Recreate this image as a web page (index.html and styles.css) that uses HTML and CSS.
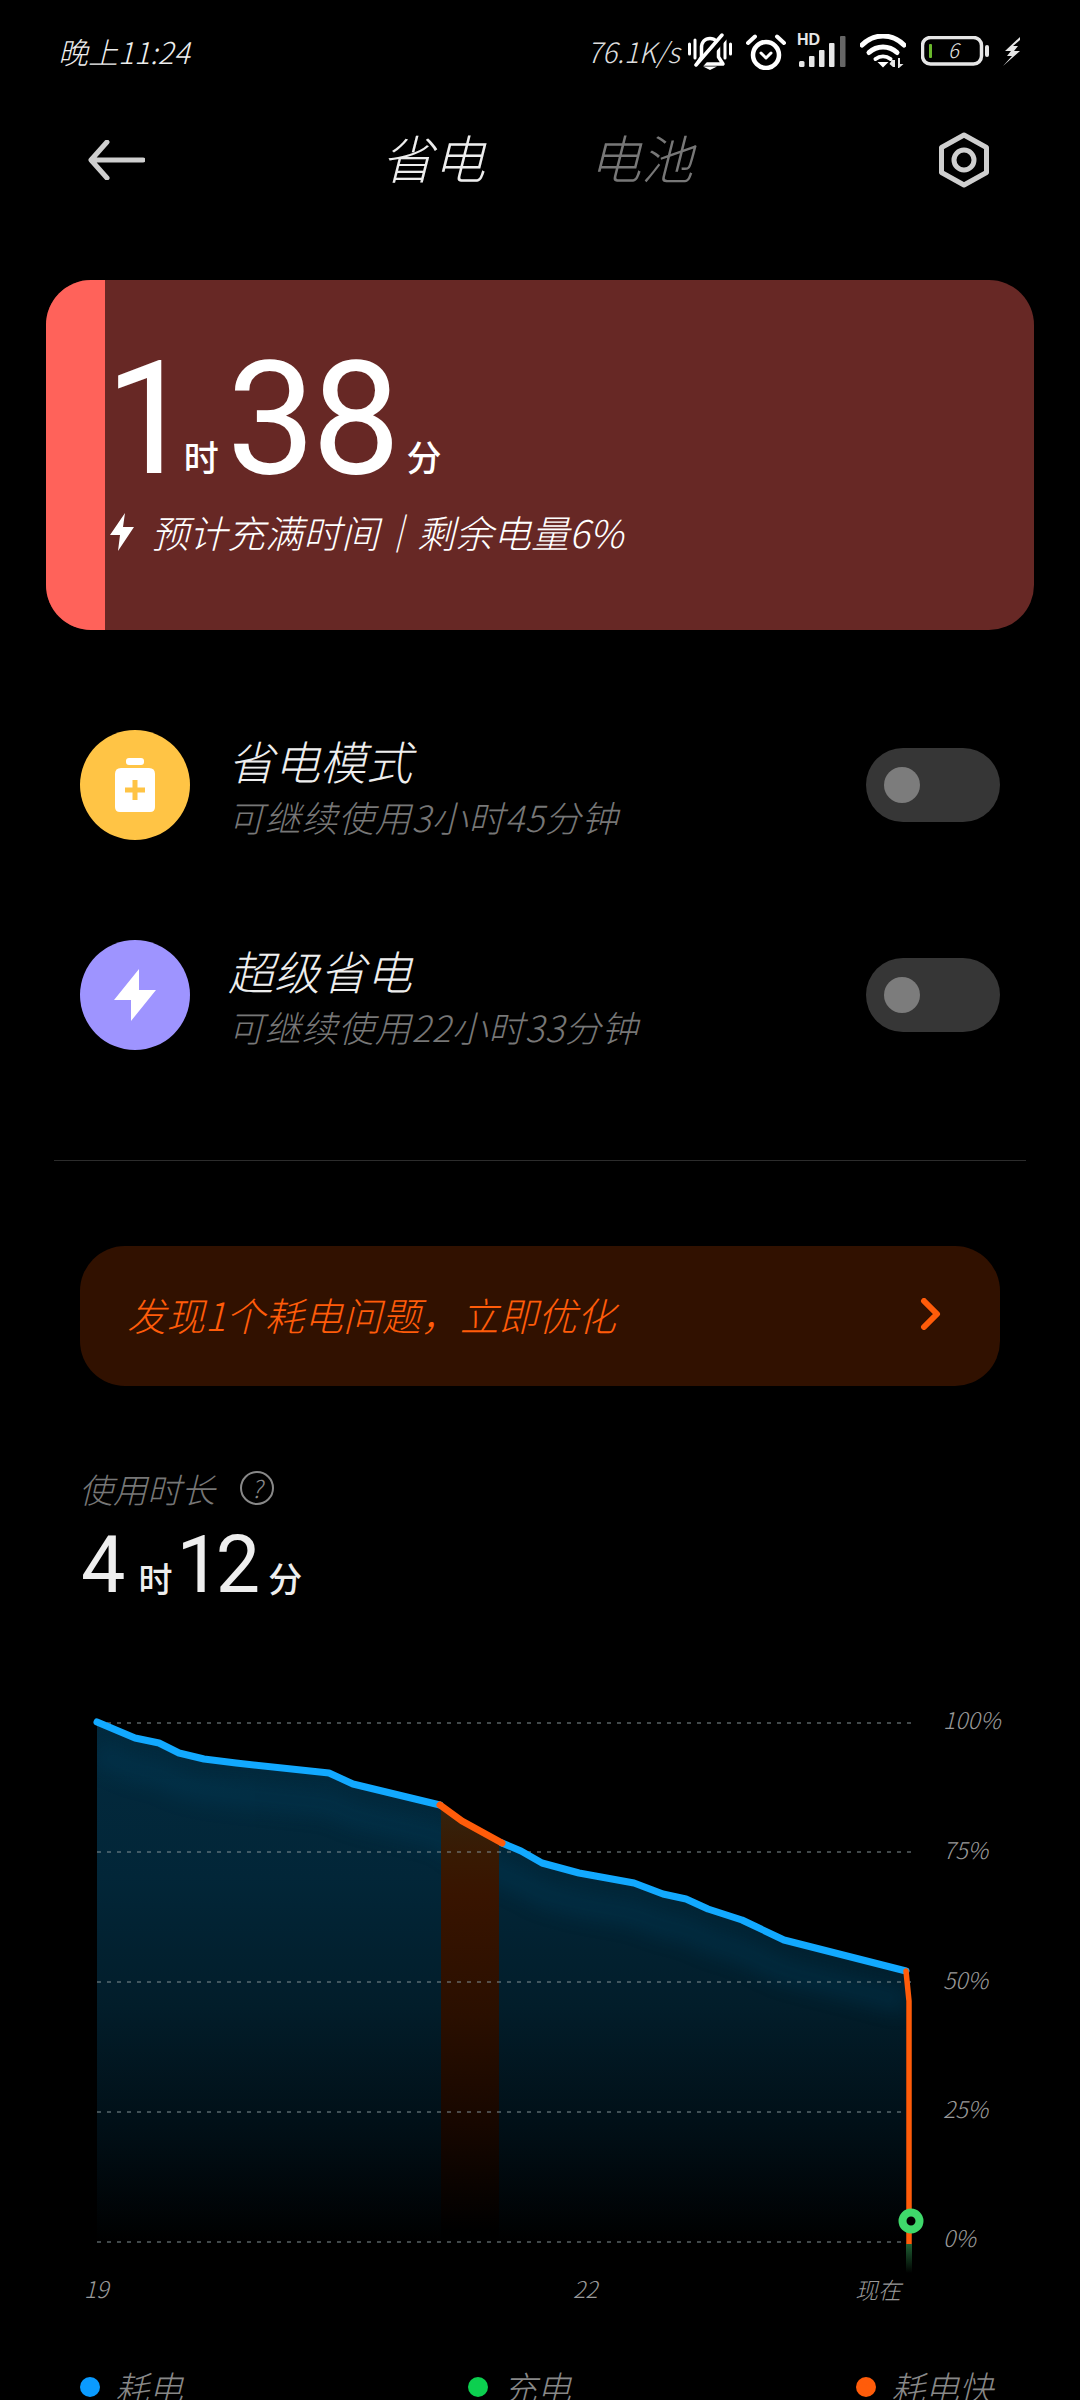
FILE: index.html
```html
<!DOCTYPE html>
<html lang="zh-CN">
<head>
    <meta charset="UTF-8">
    <meta name="viewport" content="width=device-width, initial-scale=1.0">
    <title>省电</title>
    <link rel="stylesheet" href="styles.css">
</head>
<body>
    <!-- Status bar -->
    <div class="status-bar">
        <span class="status-time">晚上11:24</span>
        <div class="status-icons">
            <span class="status-speed">76.1K/s</span>
            <svg class="icon-bell" width="44" height="37" viewBox="0 0 44 37">
                <path class="line-white" d="M1.5 11V21M7 7V25M37 7V25M42.5 11V21" stroke-width="3"/>
                <path class="line-white" d="M9 31L13.5 24V15C13.5 9 17 5.5 22 5.5C27 5.5 30.5 9 30.5 15V24L35 31Z" stroke-width="3.5"/>
                <path class="line-black" d="M9 35L37 3" stroke-width="7"/>
                <path class="line-white" d="M8 32L34 2" stroke-width="3.5"/>
                <path class="fill-white" d="M15 33.5H29L22 37Z"/>
            </svg>
            <svg class="icon-alarm" width="40" height="37" viewBox="0 0 40 37">
                <circle class="line-white" cx="20" cy="22" r="13" stroke-width="4.5"/>
                <path class="line-white" d="M2 10L9 3.5M38 10L31 3.5" stroke-width="4"/>
                <path class="line-white" d="M15 20L20 25L25 20" stroke-width="3"/>
            </svg>
            <div class="icon-signal">
                <span class="signal-hd">HD</span>
                <svg width="50" height="31" viewBox="0 0 50 31">
                    <rect class="fill-light" x="2" y="25" width="5.5" height="6" rx="1.5"/>
                    <rect class="fill-light" x="12" y="20" width="5.5" height="11" rx="1"/>
                    <rect class="fill-light" x="22" y="14" width="5.5" height="17" rx="1"/>
                    <rect class="fill-light" x="32" y="7" width="5.5" height="24" rx="1"/>
                    <rect class="fill-dim" x="43" y="0" width="5.5" height="31" rx="1"/>
                </svg>
            </div>
            <svg class="icon-wifi" width="46" height="34" viewBox="0 0 46 34">
                <path class="line-white" d="M2 11C14 -1 32 -1 44 11" stroke-width="5"/>
                <path class="line-white" d="M9 18.500C17 11 29 11 37 18.500" stroke-width="5"/>
                <path class="line-white" d="M15.500 25C20 21.500 26 21.500 30.500 25" stroke-width="4"/>
                <path class="fill-white" d="M17.500 28H28.500L23 33.500Z"/>
                <path class="fill-light" d="M32 26H35V33H33L29.500 30ZM38 24H40V30L43.500 30L39 34H38Z"/>
            </svg>
            <svg class="icon-battery" width="68" height="30" viewBox="0 0 68 30">
                <rect class="line-light" x="1.500" y="1.500" width="59" height="26.500" rx="8" stroke-width="3.500"/>
                <rect class="fill-green" x="8" y="8" width="3" height="14" rx="1"/>
                <rect class="fill-light" x="64" y="9" width="4" height="12" rx="2"/>
                <text class="battery-num" x="27" y="22">6</text>
            </svg>
            <svg class="icon-charge" width="17" height="29" viewBox="0 0 17 29">
                <path class="fill-light" d="M17 0L2 14H8L4 19H9L0 29L17 14H11L15 9H10L17 3Z"/>
            </svg>
        </div>
    </div>

    <!-- Top navigation -->
    <div class="nav">
        <svg class="nav-back" width="57" height="40" viewBox="0 0 57 40">
            <path class="line-nav" d="M55 20H4M19 2L3 20L19 38" stroke-width="5"/>
        </svg>
        <div class="nav-tabs">
            <span class="nav-tab nav-tab-active">省电</span>
            <span class="nav-tab">电池</span>
        </div>
        <svg class="nav-settings" width="52" height="56" viewBox="0 0 52 56">
            <path class="line-nav" d="M26 3L48.500 15.500V40.500L26 53L3.500 40.500V15.500Z" stroke-width="5"/>
            <circle class="line-nav" cx="26" cy="28" r="10" stroke-width="5"/>
        </svg>
    </div>

    <!-- Remaining time card -->
    <div class="time-card">
        <div class="time-card-bar"></div>
        <div class="time-card-body">
            <div class="time-big">
                <span class="big-num big-num-one">1</span><span class="big-unit big-unit-hour">时</span><span class="big-num">38</span><span class="big-unit big-unit-min">分</span>
            </div>
            <div class="time-note">
                <svg width="24" height="38" viewBox="0 0 24 38">
                    <path class="fill-white" d="M15 0L0 22H10L8 38L24 14H13Z"/>
                </svg>
                <span>预计充满时间｜剩余电量6%</span>
            </div>
        </div>
    </div>

    <!-- Power saving modes -->
    <div class="mode-list">
        <div class="mode-row">
            <div class="mode-icon mode-icon-yellow">
                <svg width="42" height="54" viewBox="0 0 42 54">
                    <rect class="fill-white" x="12" y="0" width="18" height="7" rx="3"/>
                    <path class="fill-white" d="M7 10H35Q41 10 41 16V49Q41 54 36 54H6Q1 54 1 49V16Q1 10 7 10Z"/>
                    <path class="line-yellow" d="M21 22V42M11 32H31" stroke-width="5"/>
                </svg>
            </div>
            <div class="mode-text">
                <div class="mode-title">省电模式</div>
                <div class="mode-sub">可继续使用3小时45分钟</div>
            </div>
            <div class="toggle"><div class="toggle-knob"></div></div>
        </div>
        <div class="mode-row">
            <div class="mode-icon mode-icon-purple">
                <svg width="42" height="52" viewBox="0 0 42 52">
                    <path class="fill-white" d="M25 0L0 31H17L17 52L42 21H25Z"/>
                </svg>
            </div>
            <div class="mode-text">
                <div class="mode-title">超级省电</div>
                <div class="mode-sub">可继续使用22小时33分钟</div>
            </div>
            <div class="toggle"><div class="toggle-knob"></div></div>
        </div>
    </div>

    <div class="divider"></div>

    <!-- Optimise banner -->
    <div class="banner">
        <span>发现1个耗电问题，立即优化</span>
        <svg width="22" height="32" viewBox="0 0 22 32">
            <path class="line-orange" d="M4 3L17 16L4 29" stroke-width="6"/>
        </svg>
    </div>

    <!-- Usage time -->
    <div class="usage">
        <div class="usage-label">
            <span>使用时长</span>
            <span class="usage-help">?</span>
        </div>
        <div class="usage-value">
            <span class="usage-num">4</span><span class="usage-unit">时</span><span class="usage-num usage-num-tight">12</span><span class="usage-unit">分</span>
        </div>
    </div>

    <!-- Battery chart, drawn in page coordinates -->
    <svg class="chart" width="1080" height="640" viewBox="0 1690 1080 640">
        <defs>
            <linearGradient id="areaFill" x1="0" y1="1720" x2="0" y2="2241" gradientUnits="userSpaceOnUse">
                <stop offset="0" stop-color="#032a3e"/>
                <stop offset="0.3" stop-color="#022638"/>
                <stop offset="0.55" stop-color="#021d2a"/>
                <stop offset="0.8" stop-color="#010e15"/>
                <stop offset="1" stop-color="#000"/>
            </linearGradient>
            <linearGradient id="fastFill" x1="0" y1="1800" x2="0" y2="2230" gradientUnits="userSpaceOnUse">
                <stop offset="0" stop-color="#34240f"/>
                <stop offset="0.12" stop-color="#381a03"/>
                <stop offset="0.22" stop-color="#381400"/>
                <stop offset="0.5" stop-color="#2a0f00"/>
                <stop offset="0.75" stop-color="#170700"/>
                <stop offset="1" stop-color="#000"/>
            </linearGradient>
            <linearGradient id="glowFill" x1="0" y1="2243" x2="0" y2="2272" gradientUnits="userSpaceOnUse">
                <stop offset="0" stop-color="#1f5f33"/>
                <stop offset="1" stop-color="#000"/>
            </linearGradient>
            <clipPath id="areaClip">
                <path d="M97 1721L135 1737L159 1742L179 1752L204 1758L236 1762L329 1772L353 1783L440 1804L462 1820L502 1842L521 1850L542 1862L579 1872L634 1882L663 1893L686 1898L708 1908L742 1919L784 1939L906 1970V2241H97Z"/>
            </clipPath>
            <filter id="bandBlur" x="-5%" y="-20%" width="110%" height="140%">
                <feGaussianBlur stdDeviation="9"/>
            </filter>
        </defs>

        <path class="chart-area" d="M97 1721L135 1737L159 1742L179 1752L204 1758L236 1762L329 1772L353 1783L440 1804L462 1820L502 1842L521 1850L542 1862L579 1872L634 1882L663 1893L686 1898L708 1908L742 1919L784 1939L906 1970V2241H97Z"/>
        <g clip-path="url(#areaClip)">
            <path class="chart-band" d="M97 1752L135 1768L159 1773L179 1783L204 1789L236 1793L329 1803L353 1814L440 1835L462 1851L502 1873L521 1881L542 1893L579 1903L634 1913L663 1924L686 1929L708 1939L742 1950L784 1970L906 2001" filter="url(#bandBlur)"/>
            <rect class="chart-fast" x="441" y="1790" width="58" height="451"/>
        </g>

        <path class="chart-grid" d="M97 1722H913M97 1851H913M97 1981H913M97 2111H913M97 2241H913"/>

        <path class="chart-line-blue" d="M97 1721L135 1737L159 1742L179 1752L204 1758L236 1762L329 1772L353 1783L440 1804"/>
        <path class="chart-line-blue" d="M502 1842L521 1850L542 1862L579 1872L634 1882L663 1893L686 1898L708 1908L742 1919L784 1939L906 1970"/>
        <path class="chart-line-orange" d="M440 1804L462 1820L502 1842"/>
        <path class="chart-line-drop" d="M906 1970L909 2000V2243"/>

        <rect class="chart-glow" x="906" y="2243" width="6" height="29"/>
        <circle class="chart-dot" cx="911" cy="2220" r="8.500"/>

        <text class="chart-label" x="943" y="1728">100%</text>
        <text class="chart-label" x="943" y="1858">75%</text>
        <text class="chart-label" x="943" y="1988">50%</text>
        <text class="chart-label" x="943" y="2117">25%</text>
        <text class="chart-label" x="943" y="2246">0%</text>
        <text class="chart-label" x="84" y="2297">19</text>
        <text class="chart-label" x="573" y="2297">22</text>
        <text class="chart-label" x="855" y="2298">现在</text>
    </svg>

    <!-- Legend -->
    <div class="legend">
        <div class="legend-item"><span class="legend-dot legend-blue"></span>耗电</div>
        <div class="legend-item"><span class="legend-dot legend-green"></span>充电</div>
        <div class="legend-item"><span class="legend-dot legend-orange"></span>耗电快</div>
    </div>
</body>
</html>
```

FILE: styles.css
```css
body {
    margin: 0;
    width: 1080px;
    height: 2400px;
    overflow: hidden;
    background-color: #000;
    color: #fff;
    font-family: "Noto Sans CJK SC", "Noto Sans", sans-serif;
    font-weight: 300;
}

/* Shared svg paints */
.line-white, .line-black, .line-light, .line-nav, .line-yellow, .line-orange {
    fill: none;
    stroke-linecap: round;
    stroke-linejoin: round;
}
.line-white { stroke: #fff; }
.line-black { stroke: #000; }
.line-light { stroke: #e6e6e6; }
.line-nav { stroke: #cfcfcf; }
.line-yellow { stroke: #ffc445; stroke-linecap: butt; }
.line-orange { stroke: #ff5c0a; }
.fill-white { fill: #fff; }
.fill-light { fill: #e6e6e6; }
.fill-dim { fill: #666; }
.fill-green { fill: #6ab82c; }

/* Status bar */
.status-bar {
    height: 102px;
    padding: 0 60px 0 58px;
    display: flex;
    justify-content: space-between;
    align-items: center;
    box-sizing: border-box;
}

.status-time {
    font-size: 30px;
    font-style: italic;
    color: #eee;
}

.status-icons {
    display: flex;
    align-items: center;
}

.status-speed {
    font-size: 28px;
    font-style: italic;
    color: #ddd;
    margin-right: 8px;
}

.icon-bell { margin-right: 14px; }
.icon-alarm { margin-right: 11px; }
.icon-wifi { margin-right: 15px; }
.icon-battery { margin-right: 14px; }

.icon-signal {
    position: relative;
    width: 50px;
    height: 31px;
    margin-right: 13px;
}

.signal-hd {
    position: absolute;
    left: 0;
    top: -3px;
    font-family: "Liberation Sans", sans-serif;
    font-size: 16px;
    font-weight: 700;
    line-height: 14px;
    color: #e6e6e6;
}

.battery-num {
    font-size: 20px;
    font-style: italic;
    fill: #e6e6e6;
}

/* Navigation */
.nav {
    height: 116px;
    padding: 0 90px 0 88px;
    display: flex;
    justify-content: space-between;
    align-items: center;
}

.nav-tabs {
    display: flex;
    gap: 104px;
    margin: -6px 0 0 -9px;
}

.nav-tab {
    font-size: 52px;
    line-height: 60px;
    font-style: italic;
    color: #777;
}

.nav-tab-active {
    color: #eee;
}

/* Time card */
.time-card {
    margin: 62px 46px 0;
    height: 350px;
    border-radius: 45px;
    background-color: #672825;
    overflow: hidden;
    display: flex;
}

.time-card-bar {
    width: 59px;
    background-color: #ff625a;
}

.time-card-body {
    padding-top: 56px;
}

.time-big {
    display: flex;
    align-items: baseline;
    height: 166px;
}

.big-num {
    font-family: Roboto, sans-serif;
    font-size: 158px;
    font-weight: 400;
    line-height: 166px;
    letter-spacing: -4px;
}

/* the 1 has a wide advance, 时 tucks in beside it */
.big-num-one {
    letter-spacing: -10px;
}

.big-unit {
    font-size: 35px;
    font-weight: 500;
    line-height: 35px;
    align-self: flex-end;
    margin-bottom: 29px;
}

.big-unit-hour {
    margin-right: 8px;
}

.big-unit-min {
    margin-left: 10px;
}

.time-note {
    margin: 10px 0 0 5px;
    display: flex;
    align-items: center;
    gap: 17px;
    font-size: 38px;
    line-height: 40px;
    font-style: italic;
}

/* Mode rows */
.mode-list {
    margin: 50px 80px 0 80px;
}

.mode-row {
    height: 210px;
    display: flex;
    align-items: center;
}

.mode-icon {
    width: 110px;
    height: 110px;
    border-radius: 50%;
    display: flex;
    justify-content: center;
    align-items: center;
    flex-shrink: 0;
}

.mode-icon-yellow { background-color: #ffc445; }
.mode-icon-purple { background-color: #9e94ff; }

.mode-text {
    margin-left: 38px;
    flex: 1;
}

.mode-title {
    font-size: 46px;
    line-height: 56px;
    font-style: italic;
    color: #eee;
}

.mode-sub {
    margin-top: 6px;
    font-size: 36px;
    line-height: 44px;
    letter-spacing: 0.7px;
    font-style: italic;
    color: #777;
}

.toggle {
    width: 134px;
    height: 74px;
    border-radius: 37px;
    background-color: #363636;
    display: flex;
    align-items: center;
    padding-left: 18px;
    box-sizing: border-box;
}

.toggle-knob {
    width: 36px;
    height: 36px;
    border-radius: 50%;
    background-color: #7c7c7c;
}

.divider {
    margin: 60px 54px 0;
    height: 1px;
    background-color: #2c2c2c;
}

/* Banner */
.banner {
    margin: 85px 80px 0;
    height: 140px;
    border-radius: 45px;
    background-color: #311100;
    color: #ff5c0a;
    font-size: 39px;
    font-style: italic;
    display: flex;
    justify-content: space-between;
    align-items: center;
    padding: 0 58px 4px 47px;
    box-sizing: border-box;
}

/* Usage */
.usage {
    margin: 82px 0 0 79px;
}

.usage-label {
    display: flex;
    align-items: center;
    gap: 25px;
    height: 40px;
    font-size: 34px;
    font-style: italic;
    color: #777;
}

.usage-help {
    width: 30px;
    height: 30px;
    border: 2.5px solid #888;
    border-radius: 50%;
    font-size: 24px;
    line-height: 30px;
    text-align: center;
    color: #888;
}

.usage-value {
    display: flex;
    align-items: baseline;
    margin-top: 15px;
    margin-left: 2px;
    color: #eee;
}

.usage-num {
    font-family: Roboto, sans-serif;
    font-size: 79px;
    font-weight: 400;
    line-height: 84px;
}

.usage-num-tight {
    letter-spacing: -5px;
}

.usage-unit {
    font-size: 34px;
    font-weight: 500;
    margin: 0 4px 0 13px;
}

/* Chart */
.chart {
    display: block;
    margin-top: 84px;
}

.chart-area { fill: url(#areaFill); }
.chart-fast { fill: url(#fastFill); }
.chart-glow { fill: url(#glowFill); }

.chart-band {
    fill: none;
    stroke: #05405e;
    stroke-width: 26;
    opacity: 0.3;
}

.chart-grid {
    fill: none;
    stroke: #7d8a8e;
    stroke-width: 1.5;
    stroke-dasharray: 4 6;
    opacity: 0.7;
}

.chart-line-blue, .chart-line-orange, .chart-line-drop {
    fill: none;
    stroke-linejoin: round;
    stroke-linecap: round;
}

.chart-line-blue { stroke: #12a9ff; stroke-width: 7; }
.chart-line-orange { stroke: #ff5c0a; stroke-width: 7; }
.chart-line-drop { stroke: #ff5c0a; stroke-width: 5.5; }

.chart-dot {
    fill: #000;
    stroke: #3fd96b;
    stroke-width: 8;
}

.chart-label {
    font-size: 23px;
    font-style: italic;
    fill: #999;
}

/* Legend */
.legend {
    margin: 34px 0 0 80px;
    display: grid;
    grid-template-columns: 388px 388px 1fr;
    font-size: 34px;
    line-height: 44px;
    font-style: italic;
    color: #888;
}

.legend-item {
    display: flex;
    align-items: center;
    gap: 15px;
}

.legend-dot {
    width: 20px;
    height: 20px;
    border-radius: 50%;
}

.legend-blue { background-color: #0a9bff; }
.legend-green { background-color: #0ccf4f; }
.legend-orange { background-color: #ff5c0a; }
```
